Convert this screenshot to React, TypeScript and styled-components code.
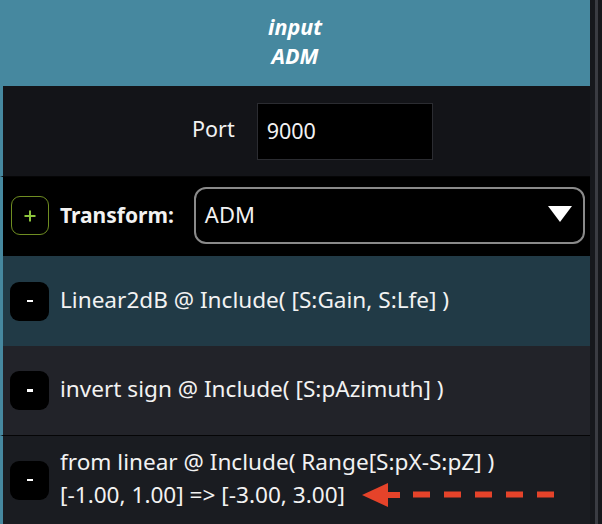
import React from "react";
import styled, { createGlobalStyle } from "styled-components";

const GlobalStyle = createGlobalStyle`
  html, body { margin: 0; padding: 0; background: #17191d; }
  body { font-family: "Noto Sans", "Open Sans", sans-serif; color: #f2f2f2; }
  * { box-sizing: border-box; }
`;

const Frame = styled.div`
  display: flex;
  width: 602px;
  height: 524px;
  overflow: hidden;
  background: #17191d;
`;

const Main = styled.div`
  width: 590px;
  display: flex;
  flex-direction: column;
`;

const ScrollTrack = styled.div`
  width: 12px;
  display: flex;
  padding-left: 5px;
  background: #16181c;
`;

const ScrollLine = styled.div`
  width: 3px;
  background: #3a3c42;
`;

const Header = styled.div`
  height: 86px;
  background: #46889f;
  display: flex;
  flex-direction: column;
  align-items: center;
  padding-top: 12px;
  font-style: italic;
  font-weight: 700;
  font-size: 21.5px;
  line-height: 29px;
  color: #ffffff;
`;

const Section = styled.div<{ $bg: string; $h: number; $line?: boolean }>`
  height: ${(p) => p.$h}px;
  background: ${(p) => p.$bg};
  border-left: 3px solid #46889f;
  display: flex;
  align-items: center;
  position: relative;
  ${(p) => (p.$line ? "border-bottom: 1px solid #050506;" : "")}
`;

const PortSection = styled(Section)`
  padding-left: 189px;
  gap: 22px;
`;

const Label = styled.span`
  font-size: 21.5px;
  padding-bottom: 6px;
`;

const PortInput = styled.div`
  width: 176px;
  height: 57px;
  background: #000;
  border: 1px solid #2b2c31;
  display: flex;
  align-items: center;
  padding-left: 9px;
  padding-bottom: 1px;
  font-size: 21.5px;
`;

const TransformSection = styled(Section)`
  padding-left: 8px;
  padding-right: 1px;
`;

const AddButton = styled.div`
  width: 38px;
  height: 39px;
  border: 1.5px solid #6f8d22;
  border-radius: 9px;
  display: flex;
  align-items: center;
  justify-content: center;
  margin-bottom: 2px;
`;

const TransformLabel = styled.span`
  font-weight: 700;
  font-size: 21px;
  margin-left: 11px;
  margin-bottom: 3px;
`;

const Select = styled.div`
  margin-left: 20px;
  margin-bottom: 2px;
  width: 391px;
  height: 57px;
  border: 2px solid #8a8a8a;
  border-radius: 12px;
  display: flex;
  align-items: center;
  justify-content: space-between;
  padding: 0 11px 3px 9px;
  font-size: 22px;
`;

const RuleSection = styled(Section)`
  padding-left: 7px;
  gap: 11px;
`;

const MinusButton = styled.div`
  width: 39px;
  height: 39px;
  border-radius: 9px;
  background: #000;
  display: flex;
  align-items: center;
  justify-content: center;
  flex-shrink: 0;
`;

const Dash = styled.div`
  width: 6px;
  height: 2.5px;
  background: #fff;
`;

const RuleText = styled.div`
  font-size: 22.6px;
  line-height: 33px;
  white-space: nowrap;
  padding-bottom: 4px;
`;

const Arrow = styled.svg`
  position: absolute;
  left: 359px;
  top: 46px;
`;

export default function App() {
  return (
    <>
      <GlobalStyle />
      <Frame>
        <Main>
          <Header>
            <span>input</span>
            <span>ADM</span>
          </Header>
          <PortSection $bg="#131418" $h={91} $line>
            <Label>Port</Label>
            <PortInput>9000</PortInput>
          </PortSection>
          <TransformSection $bg="#000000" $h={79}>
            <AddButton>
              <svg width="12" height="12" viewBox="0 0 12 12">
                <path d="M6 0.5v11M0.5 6h11" stroke="#8cc43c" strokeWidth="2" />
              </svg>
            </AddButton>
            <TransformLabel>Transform:</TransformLabel>
            <Select>
              <span>ADM</span>
              <svg width="24" height="16" viewBox="0 0 24 16">
                <path d="M0 0h24L12 16z" fill="#ffffff" />
              </svg>
            </Select>
          </TransformSection>
          <RuleSection $bg="#213a46" $h={90}>
            <MinusButton>
              <Dash />
            </MinusButton>
            <RuleText>Linear2dB @ Include( [S:Gain, S:Lfe] )</RuleText>
          </RuleSection>
          <RuleSection $bg="#222329" $h={90} $line>
            <MinusButton>
              <Dash />
            </MinusButton>
            <RuleText>invert sign @ Include( [S:pAzimuth] )</RuleText>
          </RuleSection>
          <RuleSection $bg="#1a1c21" $h={88}>
            <MinusButton>
              <Dash />
            </MinusButton>
            <RuleText>
              from linear @ Include( Range[S:pX-S:pZ] )
              <br />
              [-1.00, 1.00] =&gt; [-3.00, 3.00]
            </RuleText>
            <Arrow width="196" height="26" viewBox="0 0 196 26">
              <path d="M0 13L26 1v24z" fill="#e5432a" />
              <path d="M24 13h14" stroke="#e5432a" strokeWidth="6" />
              <path d="M51 12.5h141" stroke="#e5432a" strokeWidth="6" strokeDasharray="17 14" />
            </Arrow>
          </RuleSection>
        </Main>
        <ScrollTrack>
          <ScrollLine />
        </ScrollTrack>
      </Frame>
    </>
  );
}
